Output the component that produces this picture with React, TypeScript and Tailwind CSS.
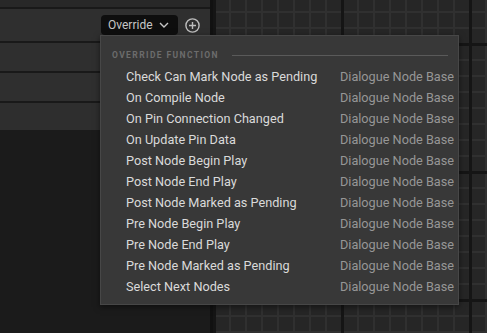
const functions = [
  'Check Can Mark Node as Pending',
  'On Compile Node',
  'On Pin Connection Changed',
  'On Update Pin Data',
  'Post Node Begin Play',
  'Post Node End Play',
  'Post Node Marked as Pending',
  'Pre Node Begin Play',
  'Pre Node End Play',
  'Pre Node Marked as Pending',
  'Select Next Nodes',
];

function Separator() {
  return <div className="h-[2px] bg-[#191919]" />;
}

export default function App() {
  return (
    <div className="relative flex w-[487px] h-[333px] overflow-hidden bg-[#1c1c1c] font-['Roboto',sans-serif]">
      {/* Details panel */}
      <div className="flex flex-col w-[213px] shrink-0 bg-[#1c1c1c] border-r-[3px] border-[#111111]">
        <div className="h-[7px] bg-[#282828]" />
        <Separator />
        <div className="h-[32px] bg-[#2f2f2f] flex items-center justify-end gap-[7px] pr-[10px]">
          <button className="h-[20px] w-[77px] rounded-[4px] bg-[#0e0e0e] flex items-center gap-[6px] pl-[7px] text-[12px] text-[#c6c6c6]">
            <span>Override</span>
            <svg width="10" height="6" viewBox="0 0 10 6" fill="none" stroke="#c6c6c6" strokeWidth="1.4">
              <path d="M1 1l4 4 4-4" />
            </svg>
          </button>
          <svg width="15" height="15" viewBox="0 0 15 15" fill="none" stroke="#bdbdbd" strokeWidth="1.4">
            <circle cx="7.5" cy="7.5" r="6.6" />
            <path d="M7.5 4v7M4 7.5h7" />
          </svg>
        </div>
        <Separator />
        <div className="h-[28px] bg-[#2f2f2f]" />
        <Separator />
        <div className="h-[28px] bg-[#2f2f2f]" />
        <Separator />
        <div className="h-[27px] bg-[#2e2e2e]" />
        <div className="flex-1 bg-[#1b1b1b]" />
      </div>

      {/* Graph canvas */}
      <div className="flex-1 bg-[#262626] bg-[linear-gradient(to_right,#151515_3px,transparent_3px),linear-gradient(to_bottom,#151515_3px,transparent_3px),linear-gradient(to_right,#303030_2px,transparent_2px),linear-gradient(to_bottom,#303030_2px,transparent_2px)] bg-[size:128px_128px,128px_128px,16px_16px,16px_16px] bg-[position:0_43px,0_43px,0_43px,0_43px]" />

      {/* Override dropdown */}
      <div className="absolute left-[100px] top-[35px] w-[359px] bg-[#383838] border border-[#474747] shadow-[0_2px_6px_rgba(0,0,0,0.5)] pt-[12px] pb-[7px]">
        <div className="h-[14px] flex items-center gap-[13px] pl-[11px] pr-[10px]">
          <span className="text-[8.5px] font-bold tracking-[1.4px] text-[#6c6c6c] leading-none">OVERRIDE FUNCTION</span>
          <div className="flex-1 h-px bg-[#5a5a5a]" />
        </div>
        <div className="mt-[4px] flex flex-col">
          {functions.map((name) => (
            <div key={name} className="h-[21px] flex items-center justify-between pl-[25px] pr-[4px] text-[12.7px]">
              <span className="text-[#dadada]">{name}</span>
              <span className="text-[#969696]">Dialogue Node Base</span>
            </div>
          ))}
        </div>
      </div>
    </div>
  );
}
